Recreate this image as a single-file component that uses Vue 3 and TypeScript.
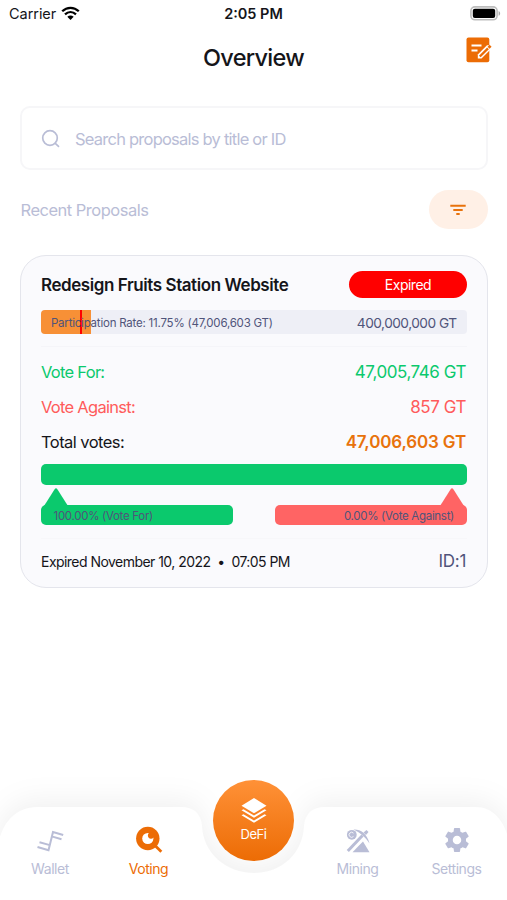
<script setup lang="ts">
interface VoteRow {
  label: string
  amount: string
  kind: string
}

const rows: VoteRow[] = [
  { label: 'Vote For:', amount: '47,005,746 GT', kind: 'for' },
  { label: 'Vote Against:', amount: '857 GT', kind: 'against' },
  { label: 'Total votes:', amount: '47,006,603 GT', kind: 'total' },
]
const participation = 11.75
</script>

<template>
  <div class="screen">
    <header class="status">
      <div class="carrier">
        <span>Carrier</span>
        <svg viewBox="0 0 19 15" width="19" height="15">
          <path d="M1.200 5.300C6 .6 13 .6 17.800 5.300M4 8.400c3.300-3 7.700-3 11 0" fill="none" stroke="#000" stroke-width="2.300" />
          <path d="M6.300 10.700c2-1.700 4.400-1.700 6.400 0L9.500 14z" />
        </svg>
      </div>
      <span class="clock">2:05 PM</span>
      <svg class="battery" viewBox="0 0 31 15" width="31" height="15">
        <rect x=".9" y=".9" width="26.200" height="12.900" rx="4" fill="#fff" stroke="#bdbdbd" stroke-width="1.600" />
        <rect x="2.800" y="2.700" width="22.400" height="9.300" rx="2" />
        <path d="M28.600 5v4.800c2-.7 2-4 0-4.800z" fill="#aaa" />
      </svg>
    </header>

    <div class="titlebar">
      <h1>Overview</h1>
      <svg class="compose" viewBox="0 0 26 26" width="26" height="26">
        <rect x=".5" y=".5" width="22.800" height="24.800" rx="2" fill="#ec6c05" />
        <path d="M5.500 8.500h10M5.500 13.500h6" stroke="#fff" stroke-width="2" />
        <path d="M11.800 21.500v-4l9.200-9.200h4.500v3.200l-10 10z" fill="#fff" />
        <path d="M13.800 19.500 22 11.300" stroke="#ec6c05" stroke-width="2.400" />
        <path d="M22.600 10.800l2-2" stroke="#ec6c05" stroke-width="2.800" />
      </svg>
    </div>

    <label class="search">
      <svg viewBox="0 0 20 20" width="20" height="20" fill="none" stroke="#b9bdd6" stroke-width="1.700">
        <circle cx="9" cy="9" r="7.300" />
        <path d="M14.300 14.300l3.200 3" stroke-linecap="round" />
      </svg>
      <span>Search proposals by title or ID</span>
    </label>

    <div class="recent">
      <span>Recent Proposals</span>
      <button class="filter">
        <svg viewBox="0 0 16 12" width="16" height="12" fill="none" stroke="#e8720c" stroke-width="2">
          <path d="M.3 1.800h15.400M3.300 6h9.400M6.300 10h3.400" />
        </svg>
      </button>
    </div>

    <article class="card">
      <div class="head">
        <h2>Redesign Fruits Station Website</h2>
        <span class="badge">Expired</span>
      </div>
      <div class="rate">
        <div class="fill" :style="{ width: participation + '%' }"></div>
        <div class="mark"></div>
        <span class="rate-label">Participation Rate: 11.75% (47,006,603 GT)</span>
        <span class="rate-max">400,000,000 GT</span>
      </div>
      <div class="votes">
        <div v-for="row in rows" :key="row.kind" class="row" :class="row.kind">
          <span class="label">{{ row.label }}</span>
          <span class="amount">{{ row.amount }}</span>
        </div>
      </div>
      <div class="total-bar"></div>
      <div class="split">
        <div class="tag tag-for">
          <svg viewBox="0 0 24 18" width="24" height="18"><path d="M0 18 10.800 1q1.200-1.500 2.400 0L24 18z" fill="#0bc96d" /></svg>
          <span>100.00% (Vote For)</span>
        </div>
        <div class="tag tag-against">
          <svg viewBox="0 0 24 18" width="24" height="18"><path d="M0 18 10.800 1q1.200-1.500 2.400 0L24 18z" fill="#ff6464" /></svg>
          <span>0.00% (Vote Against)</span>
        </div>
      </div>
      <footer class="foot">
        <span class="date">Expired November 10, 2022 &nbsp;•&nbsp; 07:05 PM</span>
        <span class="pid">ID:1</span>
      </footer>
    </article>

    <nav class="nav">
      <svg class="nav-bg" viewBox="0 0 507 120" width="507" height="120">
        <path d="M-3 70C1 42 16 27 38 27H181Q200 27 202 46C203 73 226 93 254 93S303 73 304 46Q306 27 325 27H475C493 27 505 40 510 65V130H-3Z" fill="#fff" />
      </svg>
      <a class="item wallet">
        <svg viewBox="0 0 28 24" width="28" height="24" fill="none" stroke="#b9bdd6" stroke-width="2">
          <path d="M1.500 18l11 3.200L17 3l10.200 3M3.500 13.300l9.500 2.600M16.500 7.600l9 2.600" />
        </svg>
        <span>Wallet</span>
      </a>
      <a class="item voting">
        <svg viewBox="0 0 28 28" width="28" height="28">
          <path d="M19 18.500l7.300 7.300" stroke="#ec6c05" stroke-width="2.800" />
          <circle cx="12.800" cy="12.500" r="11.700" fill="#ec6c05" />
          <circle cx="12.800" cy="12.500" r="5.600" fill="#fff" />
          <circle cx="16" cy="9.600" r="3.100" fill="#ec6c05" />
        </svg>
        <span>Voting</span>
      </a>
      <a class="defi">
        <svg viewBox="0 0 26 28" width="26" height="28" fill="#fff">
          <path d="M13 0 25.500 7.700 13 15.300 .5 7.700z" />
          <path d="M.5 12.200l2-1L13 17.400l10.500-6.200 2 1L13 19.800zM.5 17.200l2-1L13 22.400l10.500-6.200 2 1L13 24.800z" />
        </svg>
        <span>DeFi</span>
      </a>
      <a class="item mining">
        <svg viewBox="0 0 26 26" width="26" height="26" fill="#b9bdd6">
          <circle cx="6.800" cy="6.800" r="4.900" />
          <path d="M8.500 5.200a2.500 2.500 0 1 0 0 3.200" fill="none" stroke="#fff" stroke-width=".8" />
          <path d="M8.500 1.500C15 1 22 5 24.500 15.500 21 10 16.500 5.500 8.500 1.500z" />
          <path d="M17.500 7.500 2.800 23" fill="none" stroke="#b9bdd6" stroke-width="3" />
          <path d="M18.500 4.500 21.500 2l2 2-2.500 3z" />
          <path d="M7.500 24.300 13.500 18l4.500-4.500 6.500 10.800z" />
        </svg>
        <span>Mining</span>
      </a>
      <a class="item settings">
        <svg viewBox="0 0 24 24" width="30" height="30" fill="#b9bdd6">
          <path d="M19.140 12.940c.04-.3.060-.61.060-.94 0-.32-.02-.64-.07-.94l2.030-1.580c.18-.14.230-.41.120-.61l-1.920-3.320c-.12-.22-.37-.29-.59-.22l-2.390.96c-.5-.38-1.030-.7-1.620-.94l-.36-2.540c-.04-.24-.24-.41-.48-.41h-3.840c-.24 0-.43.170-.47.410l-.36 2.540c-.59.240-1.130.570-1.620.940l-2.390-.96c-.22-.08-.47 0-.59.220L2.740 8.870c-.12.210-.08.470.120.610l2.030 1.580c-.05.3-.09.630-.09.940s.02.640.07.940l-2.030 1.580c-.18.140-.23.410-.12.610l1.920 3.320c.12.220.37.290.59.220l2.390-.96c.5.380 1.030.7 1.620.940l.36 2.540c.05.240.24.410.48.410h3.840c.24 0 .44-.17.470-.41l.36-2.540c.59-.24 1.130-.56 1.620-.94l2.390.96c.22.080.47 0 .59-.22l1.920-3.320c.12-.22.070-.47-.12-.61l-2.010-1.580zM12 15.400a3.400 3.400 0 1 1 0-6.800 3.400 3.400 0 0 1 0 6.800z" />
        </svg>
        <span>Settings</span>
      </a>
    </nav>
  </div>
</template>

<style>
body {
  background: #fff;
}
</style>

<style scoped>
* {
  box-sizing: border-box;
}
.screen {
  width: 507px;
  height: 900px;
  display: flex;
  flex-direction: column;
  overflow: hidden;
  font-family: Inter, 'Liberation Sans', sans-serif;
  color: #15151a;
  background: #fff;
  white-space: nowrap;
}
.status {
  height: 26px;
  padding: 0 6px 0 9px;
  display: grid;
  grid-template-columns: 1fr auto 1fr;
  align-items: center;
  font-size: 14.500px;
}
.carrier {
  display: flex;
  align-items: center;
  gap: 5px;
  letter-spacing: -0.05px;
}
.clock {
  margin-right: 3px;
  font-weight: 600;
}
.battery {
  justify-self: end;
}
.titlebar {
  height: 80px;
  padding: 11px 15px 0;
  display: grid;
  grid-template-columns: 1fr auto 1fr;
  align-items: start;
}
h1 {
  grid-column: 2;
  margin: 7px 0 0;
  font-size: 23.500px;
  line-height: 28px;
  font-weight: 550;
  letter-spacing: -0.700px;
}
.compose {
  justify-self: end;
}
.search {
  height: 64px;
  margin: 0 19px 0 20px;
  padding: 1px 20px 0 19px;
  border: 2px solid #f6f6f8;
  border-radius: 10px;
  display: flex;
  align-items: center;
  gap: 14px;
  color: #b9bdd6;
  font-size: 16.500px;
  letter-spacing: -0.770px;
}
.recent {
  height: 39px;
  margin: 20px 19px 0 20.500px;
  display: flex;
  align-items: center;
  justify-content: space-between;
  color: #b9bdd6;
  font-size: 16.500px;
  letter-spacing: -0.500px;
}
.filter {
  width: 59px;
  height: 39px;
  padding: 0 1px 0 0;
  border: 0;
  border-radius: 20px;
  background: #fff0e6;
  display: grid;
  place-items: center;
}
.card {
  height: 333px;
  margin: 26px 19px 0 20px;
  padding: 15px 20px 0;
  border: 1.500px solid #e4e5ec;
  border-radius: 26px;
  background: #fafafd;
}
.head {
  display: flex;
  justify-content: space-between;
  align-items: center;
  height: 27px;
}
h2 {
  margin: 0;
  font-size: 17px;
  font-weight: 600;
  letter-spacing: -0.430px;
}
.badge {
  width: 118px;
  height: 27px;
  border-radius: 14px;
  background: #f00;
  color: #fff;
  font-size: 14px;
  letter-spacing: -0.500px;
  display: grid;
  place-items: center;
}
.rate {
  position: relative;
  height: 24px;
  margin-top: 12px;
  padding: 0 10.500px 0 10px;
  border-radius: 4px;
  overflow: hidden;
  background: #eeeff6;
  display: flex;
  align-items: center;
  justify-content: space-between;
  color: #50547a;
}
.fill {
  position: absolute;
  inset: 0 auto 0 0;
  background: #f79036;
}
.mark {
  position: absolute;
  inset: 0 auto 0 38.500px;
  width: 2.500px;
  background: #f00;
}
.rate-label {
  position: relative;
  padding-top: 1px;
  font-size: 11.500px;
  letter-spacing: -0.220px;
}
.rate-max {
  padding-top: 1px;
  font-size: 13.700px;
  letter-spacing: -0.520px;
}
.votes {
  margin-top: 12px;
  padding-top: 8px;
  border-top: 1px solid #f5f5f9;
}
.row {
  height: 34.700px;
  padding-right: 1px;
  display: flex;
  align-items: center;
  justify-content: space-between;
  font-size: 16.500px;
}
.label {
  letter-spacing: -0.720px;
}
.amount {
  font-size: 17px;
  letter-spacing: -0.450px;
}
.for {
  color: #0bc96d;
}
.against {
  color: #ff5b5b;
}
.total .label {
  letter-spacing: -0.550px;
}
.total .amount {
  color: #e8720c;
  font-weight: 600;
  letter-spacing: -0.150px;
}
.total-bar {
  height: 21px;
  margin-top: 5px;
  border-radius: 5px;
  background: #0bc96d;
}
.split {
  margin-top: 20px;
  display: flex;
  justify-content: space-between;
}
.tag {
  position: relative;
  width: 192px;
  height: 19.500px;
  padding: 2px 13px 0 12.500px;
  border-radius: 5px;
  display: flex;
  align-items: center;
  color: #50547a;
  font-size: 11.500px;
  letter-spacing: -0.300px;
}
.tag svg {
  position: absolute;
  top: -17px;
}
.tag-for {
  background: #0bc96d;
}
.tag-for svg {
  left: 3px;
}
.tag-against {
  background: #ff6464;
  justify-content: flex-end;
}
.tag-against svg {
  right: 3px;
}
.foot {
  margin-top: 13.500px;
  padding: 12px 1px 0 0;
  border-top: 1px solid #f7f7fa;
  display: flex;
  align-items: center;
  justify-content: space-between;
}
.date {
  font-size: 14px;
  letter-spacing: -0.540px;
}
.pid {
  font-size: 17px;
  letter-spacing: -0.300px;
  color: #50547a;
}
.nav {
  position: relative;
  margin-top: auto;
  flex: none;
  height: 120px;
  display: grid;
  grid-template-columns: 100px 97px 113px 95px 103px;
}
.nav-bg {
  position: absolute;
  inset: 0;
  overflow: visible;
  filter: drop-shadow(0 -6px 14px rgba(0, 0, 0, 0.06));
}
.item {
  position: relative;
  display: flex;
  flex-direction: column;
  align-items: center;
  justify-content: flex-end;
  padding-bottom: 22px;
  gap: 6px;
  color: #b9bdd6;
  font-size: 14px;
  line-height: 18px;
  letter-spacing: -0.450px;
}
.wallet svg {
  margin-bottom: 1px;
}
.voting {
  color: #ec6c05;
}
.settings svg {
  margin-bottom: -1px;
}
.defi {
  position: relative;
  justify-self: center;
  width: 81px;
  height: 81px;
  border-radius: 50%;
  background: linear-gradient(#ff9137, #ec6c05);
  color: #fff;
  font-size: 13px;
  line-height: 16px;
  letter-spacing: -0.400px;
  display: flex;
  flex-direction: column;
  align-items: center;
  padding-top: 18px;
}
</style>
